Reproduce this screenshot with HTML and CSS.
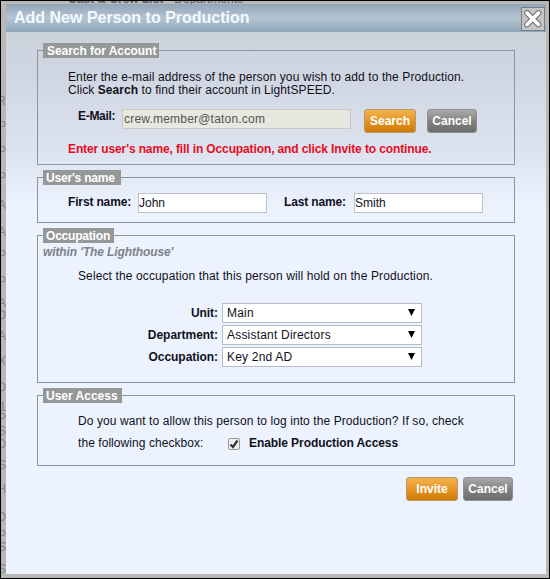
FILE: index.html
```html
<!DOCTYPE html>
<html lang="en">
<head>
<meta charset="utf-8">
<title>Add New Person to Production</title>
<link rel="stylesheet" href="styles.css">
</head>
<body>
<div class="page">
  <div class="under" aria-hidden="true">
    <span class="tabs"><b>Cast &amp; Crew List</b><u>Departments</u></span>
    <i style="top:93px">R</i><i style="top:118px">P</i><i style="top:143px">P</i><i style="top:169px">P</i><i style="top:197px">A</i><i style="top:224px">A</i><i style="top:247px">P</i><i style="top:273px">P</i><i style="top:295px">A</i><i style="top:307px">O</i><i style="top:328px">A</i><i style="top:353px">X</i><i style="top:379px">O</i><i style="top:399px">1</i><i style="top:410px">P</i><i style="top:423px">S</i><i style="top:436px">O</i><i style="top:457px">S</i><i style="top:481px">H</i><i style="top:509px">O</i><i style="top:527px">P</i><i style="top:539px">S</i><i style="top:561px">S</i>
  </div>
  <main class="dialog">
    <header class="title">
      <h1>Add New Person to Production</h1>
      <button class="close" aria-label="Close">
        <svg width="24" height="24" viewBox="0 0 24 24"><path d="M6 6L17.5 17.5M17.5 6L6 17.5" stroke="#666" stroke-width="5.6" stroke-linecap="round"/><path d="M6 6L17.5 17.5M17.5 6L6 17.5" stroke="#fff" stroke-width="3.8" stroke-linecap="round"/></svg>
      </button>
    </header>
    <section class="group search">
      <h2>Search for Account</h2>
      <p class="intro"><span class="l1">Enter the e-mail address of the person you wish to add to the Production.</span><br><span class="l2">Click <b>Search</b> to find their account in LightSPEED.</span></p>
      <div class="email-row">
        <label>E-Mail:</label><span class="field email">crew.member@taton.com</span><button class="btn orange">Search</button><button class="btn gray">Cancel</button>
      </div>
      <p class="error">Enter user's name, fill in Occupation, and click Invite to continue.</p>
    </section>
    <section class="group names">
      <h2>User's name</h2>
      <div class="name-row">
        <label>First name:</label><span class="field">John</span><label class="last">Last name:</label><span class="field">Smith</span>
      </div>
    </section>
    <section class="group job">
      <h2>Occupation</h2>
      <p class="within">within 'The Lighthouse'</p>
      <p class="hint">Select the occupation that this person will hold on the Production.</p>
      <div class="pick"><label>Unit:</label><span class="select">Main<svg width="7" height="7"><path d="M0 0h7L3.5 7z"/></svg></span></div>
      <div class="pick"><label>Department:</label><span class="select">Assistant Directors<svg width="7" height="7"><path d="M0 0h7L3.5 7z"/></svg></span></div>
      <div class="pick"><label>Occupation:</label><span class="select">Key 2nd AD<svg width="7" height="7"><path d="M0 0h7L3.5 7z"/></svg></span></div>
    </section>
    <section class="group access">
      <h2>User Access</h2>
      <p class="ask">Do you want to allow this person to log into the Production? If so, check</p>
      <div class="check-row"><span class="following">the following checkbox:</span><span class="check"><svg width="10" height="10" viewBox="0 0 10 10"><path d="M1.5 5.5L4 8L8.5 1.5" fill="none" stroke="#333" stroke-width="2.2"/></svg></span><b>Enable Production Access</b></div>
    </section>
    <footer class="actions"><button class="btn orange">Invite</button><button class="btn gray">Cancel</button></footer>
  </main>
</div>
</body>
</html>
```

FILE: styles.css
```css
* { box-sizing: border-box; }
body { margin: 0; font: 12px/13px "Liberation Sans", Arial, sans-serif; color: #10101c; }
h1, h2, p { margin: 0; white-space: nowrap; }
label { font-weight: bold; white-space: nowrap; }
.page { position: relative; width: 550px; height: 579px; padding: 3px 3px 4px 5px; border: 1px solid #000; background: #b9b7b8; overflow: hidden; }
.under { position: absolute; inset: 0; color: #85868a; }
.under i { position: absolute; right: 543px; font-style: normal; line-height: 14px; }
.tabs { position: absolute; left: 67px; top: -8px; display: flex; gap: 11px; color: #57606a; line-height: 12px; white-space: nowrap; }
.tabs u { text-decoration: none; }
.dialog { position: relative; height: 570px; background: linear-gradient(#ccd2dc 28px, #d0d6e1 70px, #dde4f0 150px, #ecf3ff 205px); }
.title { height: 28px; display: flex; justify-content: space-between; background: linear-gradient(#93a6b8, #b3c4d1 50%, #8fa7ba); }
h1 { padding-left: 8px; color: #f4f9ff; font-size: 16px; line-height: 27px; }
.close { width: 24px; height: 24px; margin: 3px 1px 0 0; padding: 0; border: 1px solid #777e86; background: #c3c5c6; }
.close svg { display: block; margin: -1px; }
.group { width: 478px; margin-left: 31px; border: 1px solid #8c939f; }
h2 { width: max-content; height: 15px; margin: -8px 0 0 5px; padding: 0 3px; background: #969897; color: #fff; font-size: 12px; line-height: 16px; }
.search { height: 115px; margin-top: 18px; }
.search h2 { width: 116px; padding-left: 4px; letter-spacing: -.05px; }
.intro { margin: 13px 0 0 30px; }
.l1 { letter-spacing: .11px; }
.l2 { letter-spacing: .07px; }
.email-row { display: flex; margin: 12px 0 0 40px; height: 26px; }
.email-row label { width: 44px; padding-top: 1px; letter-spacing: -.3px; }
.field { display: block; width: 129px; height: 20px; border: 1px solid #bcc1c8; background: #fff; line-height: 18px; white-space: nowrap; }
.email { width: 229px; padding-left: 1px; background: #e8e7e0; border-color: #c8cac9; color: #545454; letter-spacing: .2px; }
.btn { height: 24px; padding: 0; border: 1px solid #8f8f91; border-radius: 3px; color: #fff; font: bold 12px/20px "Liberation Sans", Arial, sans-serif; }
.orange { width: 52px; background: linear-gradient(#f2b24e, #e2901c 60%, #cd7907); border-color: #b8996c; }
.gray { width: 50px; background: linear-gradient(#aaa, #7e7f7e 55%, #6c6d6d); }
.email-row .orange { margin-left: 13px; }
.email-row .gray { margin-left: 11px; }
.error { margin: 8px 0 0 30px; color: #e90b1d; font-weight: bold; letter-spacing: -.12px; }
.names { height: 46px; margin-top: 12px; }
.names h2 { width: 78px; letter-spacing: -.2px; }
.name-row { display: flex; margin: 8px 0 0 30px; }
.name-row label { width: 70px; line-height: 19px; letter-spacing: -.15px; }
.name-row .last { margin-left: 17px; }
.job { height: 148px; margin-top: 12px; }
.job h2 { width: 71px; letter-spacing: -.2px; }
.within { margin: 3px 0 0 5px; color: #7c8288; font-weight: bold; font-style: italic; letter-spacing: -.12px; }
.hint { margin: 11px 0 20px 40px; letter-spacing: .12px; }
.pick { display: flex; height: 22px; }
.pick label { width: 180px; line-height: 21px; text-align: right; letter-spacing: -.05px; }
.select { display: flex; justify-content: space-between; align-items: center; width: 200px; height: 20px; margin-left: 4px; padding: 0 6px 0 4px; border: 1px solid #b8bcc6; background: #fff; letter-spacing: .2px; }
.select svg { margin-top: -2px; }
.access { height: 71px; margin-top: 12px; }
.access h2 { width: 79px; }
.ask { margin: 12px 0 0 40px; letter-spacing: .085px; }
.check-row { display: flex; align-items: center; margin: 9px 0 0 40px; }
.following { width: 150px; white-space: nowrap; letter-spacing: .06px; }
.check-row b { letter-spacing: -.08px; }
.check { display: flex; align-items: center; justify-content: center; width: 12px; height: 12px; border: 1px solid #999; border-radius: 2px; background: #eee; margin-right: 9px; }
.actions { display: flex; gap: 5px; margin: 11px 0 0 400px; }
```
